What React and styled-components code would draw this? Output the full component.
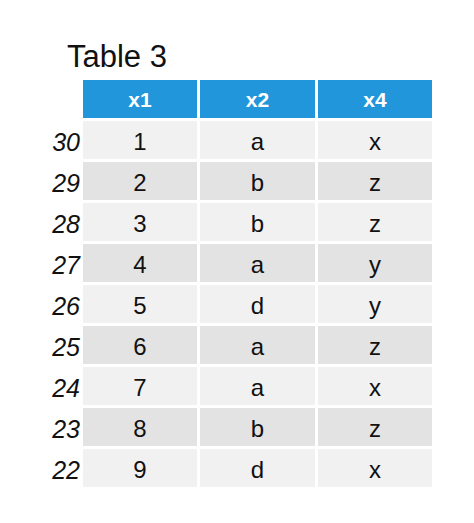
import React from "react";
import styled, { createGlobalStyle } from "styled-components";

const GlobalStyle = createGlobalStyle`
  html, body {
    margin: 0;
    padding: 0;
    background: #ffffff;
  }
  body {
    font-family: "Liberation Sans", Arial, sans-serif;
    color: #111111;
  }
`;

const rows = [
  { id: 30, x1: 1, x2: "a", x4: "x" },
  { id: 29, x1: 2, x2: "b", x4: "z" },
  { id: 28, x1: 3, x2: "b", x4: "z" },
  { id: 27, x1: 4, x2: "a", x4: "y" },
  { id: 26, x1: 5, x2: "d", x4: "y" },
  { id: 25, x1: 6, x2: "a", x4: "z" },
  { id: 24, x1: 7, x2: "a", x4: "x" },
  { id: 23, x1: 8, x2: "b", x4: "z" },
  { id: 22, x1: 9, x2: "d", x4: "x" },
];

const App = () => {
  return (
    <>
      <GlobalStyle />
      <Page>
        <Title>Table 3</Title>
        <Grid>
          <Corner />
          <HeadCell>x1</HeadCell>
          <HeadCell>x2</HeadCell>
          <HeadCell>x4</HeadCell>
          {rows.map((r, i) => (
            <React.Fragment key={r.id}>
              <RowLabel>{r.id}</RowLabel>
              <Cell dark={i % 2 === 1}>{r.x1}</Cell>
              <Cell dark={i % 2 === 1}>{r.x2}</Cell>
              <Cell dark={i % 2 === 1}>{r.x4}</Cell>
            </React.Fragment>
          ))}
        </Grid>
      </Page>
    </>
  );
};

export default App;

const Page = styled.div`
  display: flex;
  flex-direction: column;
  width: 474px;
  height: 523px;
  padding-top: 41px;
  box-sizing: border-box;
`;

const Title = styled.h1`
  margin: 0 0 8px 67px;
  font-size: 31px;
  line-height: 31px;
  font-weight: 400;
  color: #111111;
`;

const Grid = styled.div`
  display: grid;
  grid-template-columns: 80px 114px 115px 114px;
  grid-auto-rows: 38px;
  column-gap: 3px;
  row-gap: 3px;
`;

const Corner = styled.div``;

const HeadCell = styled.div`
  display: flex;
  align-items: center;
  justify-content: center;
  padding-top: 2px;
  box-sizing: border-box;
  background: #2196db;
  color: #ffffff;
  font-weight: 700;
  font-size: 21px;
`;

const Cell = styled.div`
  display: flex;
  align-items: center;
  justify-content: center;
  padding-top: 4px;
  box-sizing: border-box;
  background: ${(p) => (p.dark ? "#e3e3e3" : "#f1f1f1")};
  font-size: 24px;
  color: #111111;
`;

const RowLabel = styled.div`
  display: flex;
  align-items: center;
  justify-content: flex-end;
  padding: 4px 0 0 0;
  box-sizing: border-box;
  font-style: italic;
  font-size: 25px;
  color: #111111;
`;
